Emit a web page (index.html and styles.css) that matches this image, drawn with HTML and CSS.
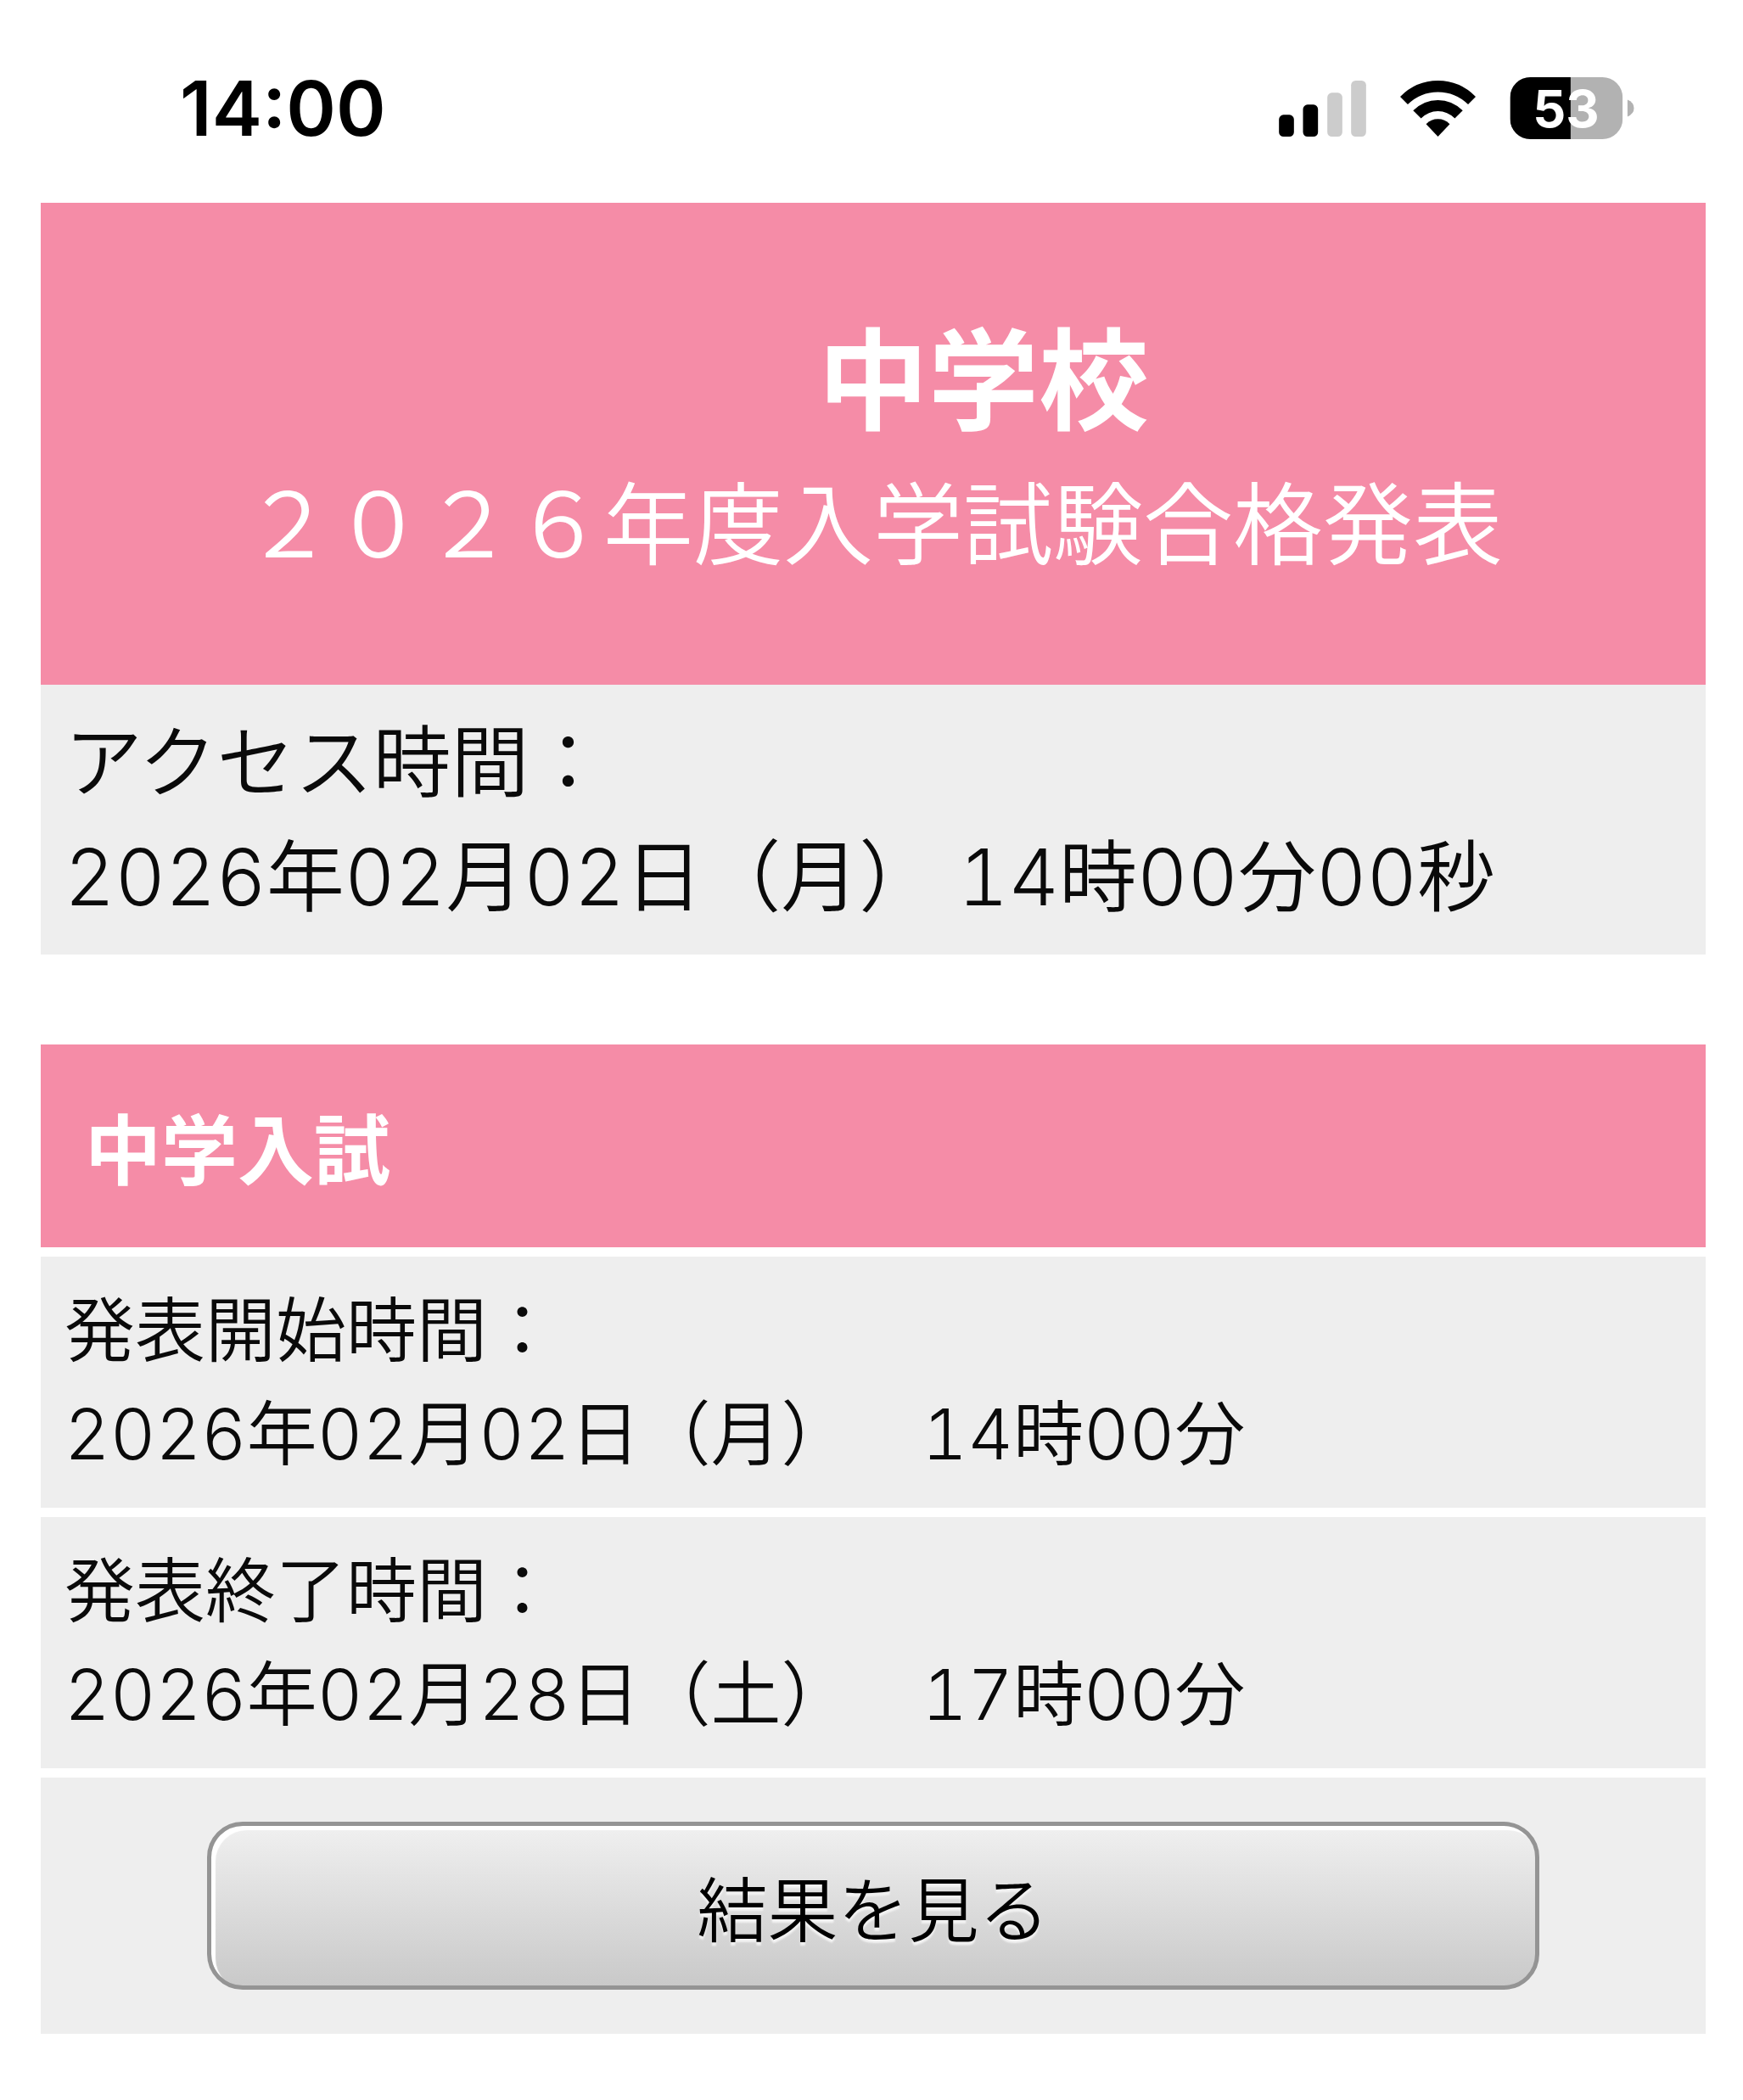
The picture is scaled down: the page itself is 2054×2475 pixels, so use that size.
FILE: index.html
```
<!DOCTYPE html>
<html lang="ja">
<head>
  <meta charset="UTF-8">
  <meta name="viewport" content="width=device-width, initial-scale=1">
  <title>中学校 ２０２６年度入学試験合格発表</title>
  <link rel="stylesheet" href="styles.css">
</head>
<body>
  <div class="status-bar">
    <time class="clock">14:00</time>
    <div class="status-icons">
      <svg class="icon-signal" viewBox="0 0 308 198" role="img" aria-label="電波">
        <rect x="0" y="121" width="53" height="77" rx="16"/>
        <rect x="85" y="85" width="53" height="113" rx="16"/>
        <rect class="off" x="171" y="43" width="53" height="155" rx="16"/>
        <rect class="off" x="255" y="0" width="53" height="198" rx="16"/>
      </svg>
      <svg class="icon-wifi" viewBox="0 0 268 198" role="img" aria-label="Wi-Fi">
        <path d="M0 57 Q56 0 134 0 Q212 0 268 57 L241 84 Q196 40 134 40 Q72 40 27 84 Z"/>
        <path d="M46 106 Q84 69 134 69 Q184 69 222 106 L194 134 Q168 108 134 108 Q100 108 74 134 Z"/>
        <path d="M92 154 Q110 136 134 136 Q158 136 176 154 L134 198 Z"/>
      </svg>
      <svg class="icon-battery" viewBox="0 0 440 220" role="img" aria-label="バッテリー 53%">
        <defs>
          <clipPath id="battery-body">
            <rect x="0" y="0" width="400" height="220" rx="72"/>
          </clipPath>
        </defs>
        <g clip-path="url(#battery-body)">
          <rect class="level-rest" x="0" y="0" width="400" height="220"/>
          <rect x="0" y="0" width="215" height="220"/>
        </g>
        <path class="level-rest" d="M417 80 Q440 90 440 110 Q440 130 417 140 Z"/>
        <text x="199" y="177" text-anchor="middle">53</text>
      </svg>
    </div>
  </div>

  <main class="page">
    <header class="hero">
      <h1>　　中学校</h1>
      <p>２０２６年度入学試験合格発表</p>
    </header>
    <div class="access-time">
      アクセス時間：<br>
      2026年02月02日（月） 14時00分00秒
    </div>

    <section class="exam">
      <h2>中学入試</h2>
      <div class="row">
        発表開始時間：<br>
        2026年02月02日（月）　14時00分
      </div>
      <div class="row">
        発表終了時間：<br>
        2026年02月28日（土）　17時00分
      </div>
      <div class="row row-button">
        <button class="result-btn" type="button">結果を見る</button>
      </div>
    </section>
  </main>
</body>
</html>
```
FILE: styles.css
```
:root {
  --pink: #f58ca7;
  --gray: #eeeeee;
  --text: #0a0a0a;
  --side: 48px;
}

* {
  box-sizing: border-box;
}

body {
  margin: 0;
  background: #ffffff;
  color: var(--text);
  font-family: Inter, "Noto Sans CJK JP", sans-serif;
  font-weight: 350;
  text-spacing-trim: space-all;
}

/* status bar */
.status-bar {
  display: flex;
  justify-content: space-between;
  align-items: center;
  padding: 72px 128px 56px 212px;
}

.clock {
  color: #000000;
  font-size: 89px;
  font-weight: 600;
  line-height: 111px;
}

.status-icons {
  display: flex;
  align-items: center;
  gap: 40px;
}

.icon-signal {
  width: 103px;
  height: 66px;
}

.icon-signal .off {
  fill: #cccccc;
}

.icon-wifi {
  width: 89px;
  height: 66px;
}

.icon-battery {
  width: 147px;
  height: 73px;
}

.icon-battery .level-rest {
  fill: #b2b2b2;
}

.icon-battery text {
  fill: #ffffff;
  font-size: 184px;
  font-weight: 700;
}

/* page */
.page {
  padding: 0 44px 76px var(--side);
}

.hero {
  background: var(--pink);
  color: #ffffff;
  padding: 108px 0 116px;
  text-align: center;
  font-family: "Noto Sans CJK JP", sans-serif;
}

.hero h1 {
  margin: 0;
  font-size: 130px;
  font-weight: 700;
  line-height: 184px;
  white-space: pre;
}

.hero p {
  margin: 0;
  font-size: 106px;
  line-height: 160px;
}

.access-time {
  background: var(--gray);
  padding: 24px 28px;
  font-size: 92px;
  font-variant-numeric: tabular-nums;
  line-height: 135px;
}

.exam {
  display: flex;
  flex-direction: column;
  gap: 11px;
  margin-top: 106px;
}

.exam h2 {
  margin: 0;
  padding: 52px;
  background: var(--pink);
  color: #ffffff;
  font-family: "Noto Sans CJK JP", sans-serif;
  font-size: 90px;
  font-weight: 700;
  line-height: 135px;
}

.row {
  background: var(--gray);
  padding: 26px 28px;
  font-size: 83px;
  font-variant-numeric: tabular-nums;
  line-height: 122px;
}

.row-button {
  display: flex;
  justify-content: center;
  padding: 52px 0;
}

.result-btn {
  width: 80%;
  padding: 32px 0;
  border: 5px solid #949494;
  border-radius: 42px;
  background: linear-gradient(#f0f0f0, #c9c9c9);
  box-shadow: inset 5px 5px 1px #ffffff;
  color: #000000;
  font-family: "Noto Sans CJK JP", sans-serif;
  font-size: 83px;
  font-weight: 350;
  line-height: 124px;
  text-shadow: 0 4px 2px #f2f2f2;
  cursor: pointer;
}

.result-btn:active {
  background: linear-gradient(#c9c9c9, #f0f0f0);
}
```
